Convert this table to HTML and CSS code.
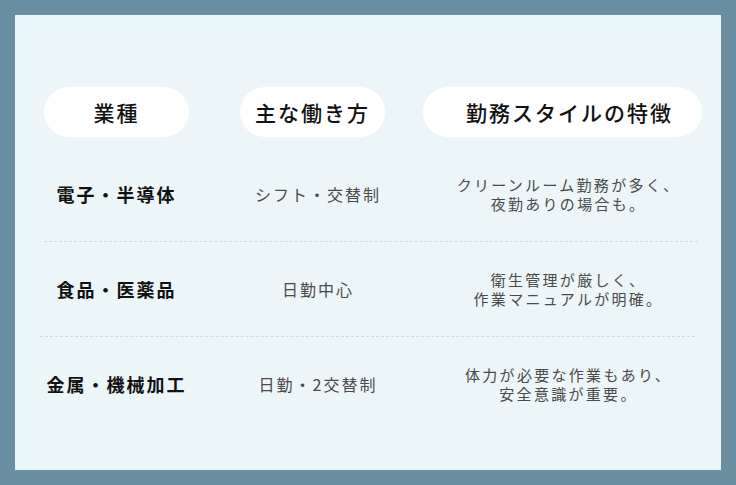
FILE: index.html
```html
<!DOCTYPE html>
<html lang="ja">
<head>
<meta charset="utf-8">
<link rel="stylesheet" href="styles.css">
</head>
<body>
<div class="panel">
  <div class="head">
    <div class="pill pill-1">業種</div>
    <div class="pill pill-2">主な働き方</div>
    <div class="pill pill-3">勤務スタイルの特徴</div>
  </div>
  <div class="row">
    <div class="c1">電子・半導体</div>
    <div class="c2">シフト・交替制</div>
    <div class="c3">クリーンルーム勤務が多く、<br>夜勤ありの場合も。</div>
  </div>
  <div class="row row-shift">
    <div class="c1">食品・医薬品</div>
    <div class="c2">日勤中心</div>
    <div class="c3">衛生管理が厳しく、<br>作業マニュアルが明確。</div>
  </div>
  <div class="row row-last">
    <div class="c1">金属・機械加工</div>
    <div class="c2">日勤・2交替制</div>
    <div class="c3">体力が必要な作業もあり、<br>安全意識が重要。</div>
  </div>
</div>
</body>
</html>
```

FILE: styles.css
```css
html, body {
  margin: 0;
  padding: 0;
}
body {
  background: #6a8fa0;
  width: 736px;
  height: 485px;
  padding: 15px;
  box-sizing: border-box;
  font-family: "Noto Sans CJK JP", "Noto Sans", sans-serif;
}
.panel {
  background: #ecf5f8;
  width: 706px;
  height: 455px;
  box-sizing: border-box;
  padding: 72px 0 0 29px;
}
.head {
  display: grid;
  grid-template-columns: 196px 183px 279px;
  margin-bottom: 10px;
}
.pill {
  background: #ffffff;
  height: 50px;
  border-radius: 25px;
  display: flex;
  align-items: center;
  justify-content: center;
  font-size: 21px;
  font-weight: 500;
  letter-spacing: 2px;
  color: #111;
}
.pill-1, .pill-2 {
  width: 145px;
}
.pill-3 {
  width: 279px;
  box-sizing: border-box;
  padding-left: 14px;
}
.row {
  display: grid;
  grid-template-columns: 196px 183px 275px;
  align-items: center;
  padding: 28px 0;
  line-height: 19px;
  width: 654px;
  border-bottom: 1px dashed #d3d9dc;
}
.row-shift {
  margin-left: -4px;
  padding-left: 4px;
  width: 651px;
}
.row-last {
  border-bottom: none;
}
.c1 {
  text-align: center;
  padding-right: 51px;
  font-size: 18px;
  font-weight: 700;
  letter-spacing: 2px;
  color: #111;
}
.c2 {
  text-align: center;
  padding-right: 27px;
  font-size: 16px;
  letter-spacing: 2px;
  color: #4a4a4a;
}
.c3 {
  text-align: center;
  padding-left: 16px;
  font-size: 15px;
  letter-spacing: 2.3px;
  color: #4a4a4a;
}
```
